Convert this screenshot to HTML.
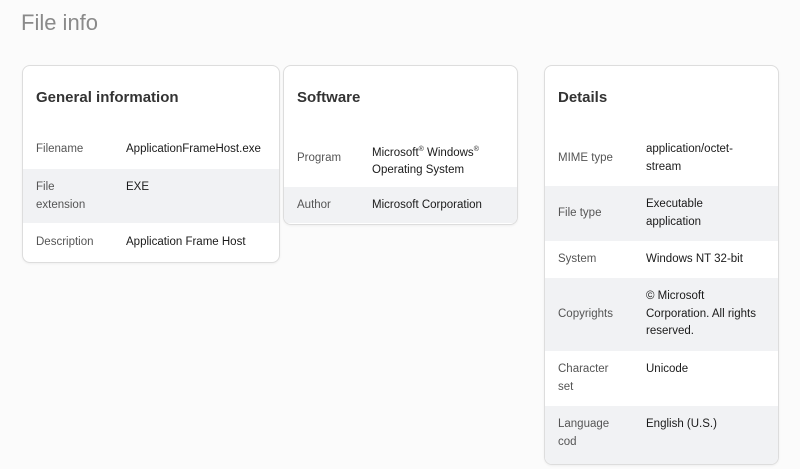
<!DOCTYPE html>
<html><head><style>
*{margin:0;padding:0;box-sizing:border-box}
body{width:800px;height:469px;background:#fbfbfb;font-family:"Liberation Sans","DejaVu Sans",sans-serif;position:relative;overflow:hidden;color:#222}
h1{position:absolute;left:21px;top:10px;font-size:22px;font-weight:normal;color:#8a8a8a}
.card{position:absolute;background:#fff;border:1px solid #ddd;border-radius:8px;overflow:hidden;box-shadow:0 1px 2px rgba(0,0,0,.05)}
.card h2{position:absolute;left:13px;top:23px;font-size:15px;font-weight:bold;color:#333}
.row{position:absolute;left:0;right:0;font-size:11.5px;line-height:17.5px}
.row.s{background:#f1f2f4}
.l,.v{position:absolute;margin-top:1px}
.l{color:#555}
.v{color:#1a1a1a}
</style></head><body>
<h1>File info</h1>

<div class="card" style="left:22px;top:65px;width:258px;height:198px">
<h2>General information</h2>
<div class="row" style="top:65px;height:38px"><span class="l" style="left:13px;top:9px">Filename</span><span class="v" style="left:103px;top:9px">ApplicationFrameHost.exe</span></div>
<div class="row s" style="top:103px;height:54px"><span class="l" style="left:13px;top:9px">File<br>extension</span><span class="v" style="left:103px;top:9px">EXE</span></div>
<div class="row" style="top:157px;height:38px"><span class="l" style="left:13px;top:10px">Description</span><span class="v" style="left:103px;top:10px">Application Frame Host</span></div>
</div>

<div class="card" style="left:283px;top:65px;width:235px;height:160px">
<h2>Software</h2>
<div class="row" style="top:65px;height:56px"><span class="l" style="left:13px;top:18px">Program</span><span class="v" style="left:88px;top:9px">Microsoft<sup style="font-size:7px">®</sup> Windows<sup style="font-size:7px">®</sup><br>Operating System</span></div>
<div class="row s" style="top:121px;height:36px"><span class="l" style="left:13px;top:9px">Author</span><span class="v" style="left:88px;top:9px">Microsoft Corporation</span></div>
</div>

<div class="card" style="left:544px;top:65px;width:235px;height:400px">
<h2>Details</h2>
<div class="row" style="top:65px;height:55px"><span class="l" style="left:13px;top:18px">MIME type</span><span class="v" style="left:101px;top:9px">application/octet-<br>stream</span></div>
<div class="row s" style="top:120px;height:55px"><span class="l" style="left:13px;top:18px">File type</span><span class="v" style="left:101px;top:9px">Executable<br>application</span></div>
<div class="row" style="top:175px;height:37px"><span class="l" style="left:13px;top:9px">System</span><span class="v" style="left:101px;top:9px">Windows NT 32-bit</span></div>
<div class="row s" style="top:212px;height:73px"><span class="l" style="left:13px;top:27px">Copyrights</span><span class="v" style="left:101px;top:9px">© Microsoft<br>Corporation. All rights<br>reserved.</span></div>
<div class="row" style="top:285px;height:55px"><span class="l" style="left:13px;top:9px">Character<br>set</span><span class="v" style="left:101px;top:9px">Unicode</span></div>
<div class="row s" style="top:340px;height:60px"><span class="l" style="left:13px;top:9px">Language<br>cod</span><span class="v" style="left:101px;top:9px">English (U.S.)</span></div>
</div>
</body></html>
